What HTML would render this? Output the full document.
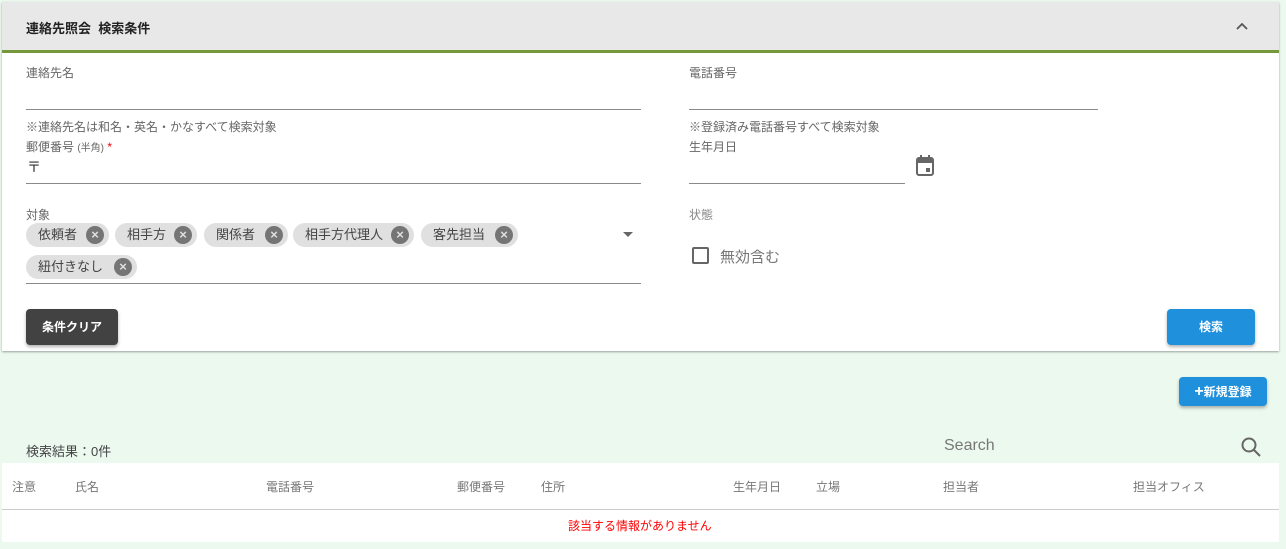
<!DOCTYPE html>
<html><head><meta charset="utf-8"><style>
*{box-sizing:border-box;margin:0;padding:0}
body{width:1286px;height:549px;background:#ecf9ef;font-family:"Liberation Sans","Noto Sans CJK JP",sans-serif;position:relative;overflow:hidden;color:#333}
.a{position:absolute;white-space:nowrap}
.card{position:absolute;left:2px;top:2px;width:1277px;height:349px;background:#fff;box-shadow:0 1px 2px rgba(0,0,0,.35)}
.hdr{position:absolute;left:0;top:0;width:100%;height:51px;background:#e8e8e8;border-bottom:3px solid #76973a}
.lbl{font-size:12px;color:#666}
.line{position:absolute;height:1px;background:#8a8a8a}
.chip{position:absolute;height:24px;border-radius:12px;background:#e0e0e0;font-size:13px;color:#444;padding:0 0 0 12px;line-height:24px}
.chip i{position:absolute;right:5px;top:3px;width:18px;height:18px;border-radius:50%;background:#757575;color:#e0e0e0;font-style:normal;font-size:13px;line-height:18px;text-align:center;font-weight:bold}
.btn{position:absolute;border-radius:4px;color:#fff;font-size:12px;font-weight:bold;text-align:center;box-shadow:0 2px 3px rgba(0,0,0,.3)}
.th{position:absolute;top:478px;font-size:12px;color:#777}
</style></head><body>
<div class="card">
<div class="hdr"><div class="a" style="left:24px;top:16px;font-size:13px;font-weight:bold;color:#222">連絡先照会&nbsp;&nbsp;検索条件</div>
<svg class="a" style="left:1233px;top:19px" width="14" height="10"><path d="M2 8 L7 3 L12 8" stroke="#555" stroke-width="1.8" fill="none"/></svg></div>
</div>
<div class="a lbl" style="left:26px;top:64px">連絡先名</div>
<div class="line" style="left:26px;top:109px;width:615px"></div>
<div class="a lbl" style="left:26px;top:118px">※連絡先名は和名・英名・かなすべて検索対象</div>
<div class="a lbl" style="left:26px;top:138px">郵便番号 <span style="font-size:10px">(半角)</span> <span style="color:#e00">*</span></div>
<div class="a" style="left:27px;top:157px;font-size:14px;color:#333">〒</div>
<div class="line" style="left:26px;top:183px;width:615px"></div>
<div class="a lbl" style="left:26px;top:206px">対象</div>
<div class="chip" style="left:26px;top:223px;width:83px">依頼者<i>×</i></div>
<div class="chip" style="left:115px;top:223px;width:82px">相手方<i>×</i></div>
<div class="chip" style="left:204px;top:223px;width:84px">関係者<i>×</i></div>
<div class="chip" style="left:293px;top:223px;width:121px">相手方代理人<i>×</i></div>
<div class="chip" style="left:421px;top:223px;width:97px">客先担当<i>×</i></div>
<div class="chip" style="left:26px;top:255px;width:111px">紐付きなし<i>×</i></div>
<svg class="a" style="left:623px;top:232px" width="10" height="6"><path d="M0 0 L10 0 L5 5Z" fill="#666"/></svg>
<div class="line" style="left:26px;top:283px;width:615px"></div>

<div class="a lbl" style="left:689px;top:64px">電話番号</div>
<div class="line" style="left:689px;top:109px;width:409px"></div>
<div class="a lbl" style="left:689px;top:118px">※登録済み電話番号すべて検索対象</div>
<div class="a lbl" style="left:689px;top:138px">生年月日</div>
<div class="line" style="left:689px;top:183px;width:216px"></div>
<svg class="a" style="left:915px;top:155px" width="20" height="22" viewBox="0 0 20 22"><rect x="2" y="3" width="16" height="17" rx="2" fill="none" stroke="#666" stroke-width="2"/><rect x="2" y="3" width="16" height="5" fill="#666"/><rect x="5" y="0" width="2" height="4" fill="#666"/><rect x="13" y="0" width="2" height="4" fill="#666"/><rect x="11" y="13" width="4" height="4" fill="#666"/></svg>
<div class="a lbl" style="left:689px;top:206px;color:#888">状態</div>
<div class="a" style="left:692px;top:247px;width:17px;height:17px;border:2px solid #666;border-radius:2px"></div>
<div class="a" style="left:720px;top:246px;font-size:15px;color:#777">無効含む</div>

<div class="btn" style="left:26px;top:309px;width:92px;height:36px;line-height:36px;background:#424242">条件クリア</div>
<div class="btn" style="left:1167px;top:309px;width:88px;height:36px;line-height:36px;background:#1e90dc">検索</div>
<div class="btn" style="left:1179px;top:377px;width:88px;height:29px;line-height:29px;background:#1e90dc"><span style="font-size:16px">+</span>新規登録</div>

<div class="a" style="left:26px;top:441px;font-size:13px;color:#444">検索結果：0件</div>
<div class="a" style="left:944px;top:437px;font-size:16px;color:#777">Search</div>
<svg class="a" style="left:1240px;top:436px" width="22" height="22"><circle cx="9" cy="9" r="6.5" fill="none" stroke="#666" stroke-width="2"/><path d="M14 14 L20 20" stroke="#666" stroke-width="2"/></svg>
<div class="line" style="left:944px;top:463px;width:319px;background:#999"></div>

<div class="a" style="left:2px;top:463px;width:1277px;height:79px;background:#fff"></div>
<div class="a" style="left:2px;top:509px;width:1277px;height:1px;background:#ccc"></div>
<div class="th" style="left:12px">注意</div>
<div class="th" style="left:75px">氏名</div>
<div class="th" style="left:266px">電話番号</div>
<div class="th" style="left:457px">郵便番号</div>
<div class="th" style="left:541px">住所</div>
<div class="th" style="left:733px">生年月日</div>
<div class="th" style="left:816px">立場</div>
<div class="th" style="left:943px">担当者</div>
<div class="th" style="left:1133px">担当オフィス</div>
<div class="a" style="left:568px;top:517px;font-size:12px;color:#f00">該当する情報がありません</div>
</body></html>
